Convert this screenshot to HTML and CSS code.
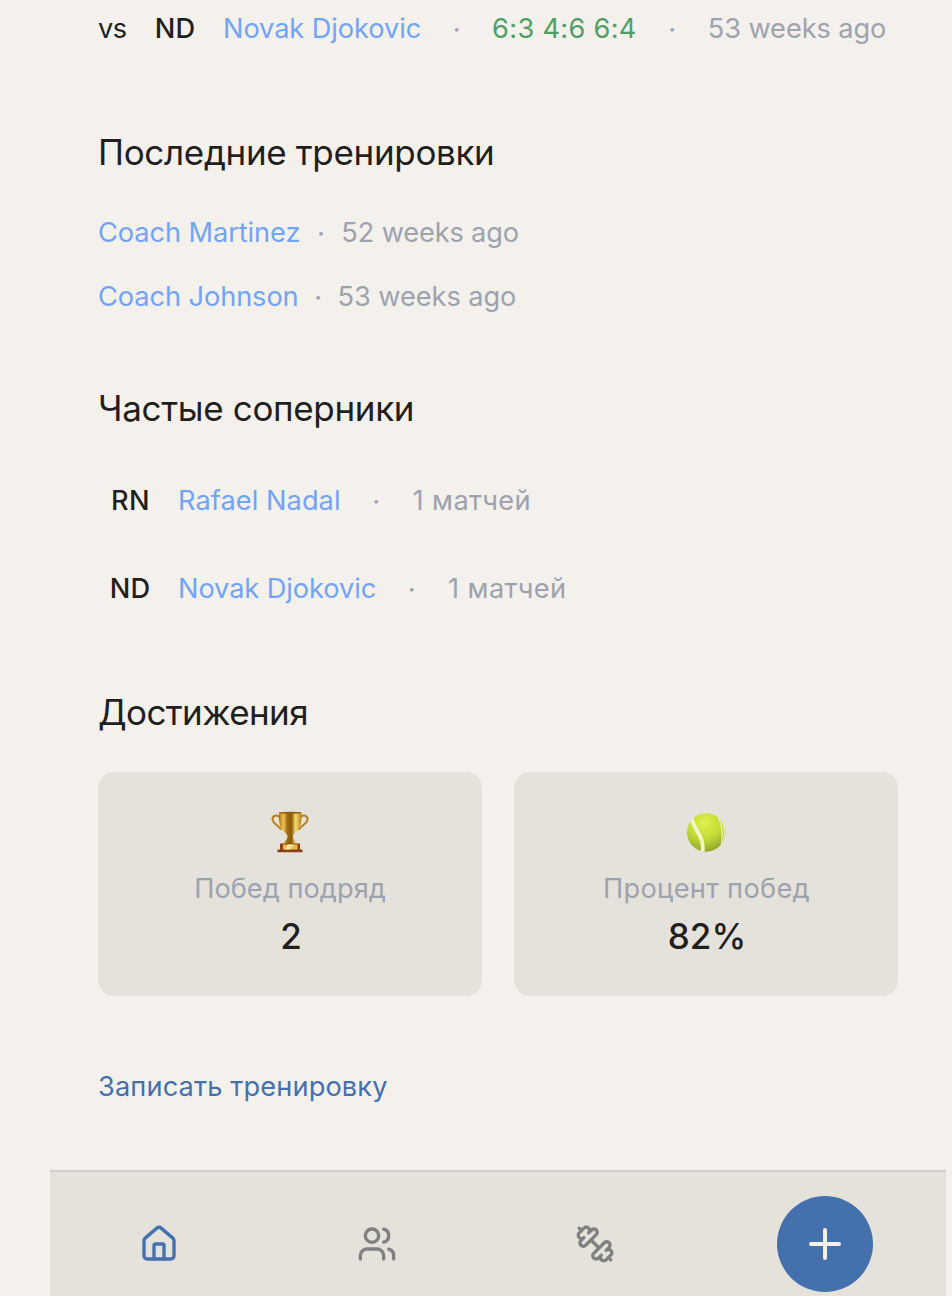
FILE: index.html
```
<!DOCTYPE html>
<html lang="ru">
<head>
<meta charset="utf-8">
<title>Профиль</title>
<link rel="stylesheet" href="styles.css">
</head>
<body>
<div class="page">
  <main class="content">
    <div class="match">
      <span class="vs">vs</span>
      <span class="avatar">ND</span>
      <a class="name">Novak Djokovic</a>
      <span class="dot">·</span>
      <span class="score">6:3 4:6 6:4</span>
      <span class="dot">·</span>
      <span class="muted">53 weeks ago</span>
    </div>

    <section class="section">
      <h2 class="title">Последние тренировки</h2>
      <div class="list">
        <div class="training"><a class="name">Coach Martinez</a><span class="dot dot-wide">·</span><span class="muted muted-tight">52 weeks ago</span></div>
        <div class="training"><a class="name">Coach Johnson</a><span class="dot">·</span><span class="muted">53 weeks ago</span></div>
      </div>
    </section>

    <section class="section">
      <h2 class="title">Частые соперники</h2>
      <div class="list">
        <div class="match"><span class="avatar avatar-wide">RN</span><a class="name name-wide">Rafael Nadal</a><span class="dot">·</span><span class="muted count">1 матчей</span></div>
        <div class="match"><span class="avatar">ND</span><a class="name">Novak Djokovic</a><span class="dot">·</span><span class="muted count">1 матчей</span></div>
      </div>
    </section>

    <section class="section">
      <h2 class="title title-tight">Достижения</h2>
      <div class="cards">
        <div class="card">
          <div class="emoji">
            <svg width="40" height="42" viewBox="0 0 40 42">
              <defs>
                <linearGradient id="gold" x1="0" x2="1" y1="0" y2="0">
                  <stop offset="0" stop-color="#a8730f"/><stop offset=".2" stop-color="#f0c04a"/><stop offset=".38" stop-color="#9c6a10"/><stop offset=".55" stop-color="#8a5a0c"/><stop offset=".74" stop-color="#f9dc70"/><stop offset="1" stop-color="#b07a18"/>
                </linearGradient>
              </defs>
              <g fill="none" stroke="#b9811c" stroke-width="2" stroke-linecap="round">
                <path d="M10 6.500C7 3 1.800 4.600 2.600 9C3.400 13 8 14 10.600 18"/>
                <path d="M30 6.500C33 3 38.200 4.600 37.400 9C36.600 13 32 14 29.400 18"/>
              </g>
              <path fill="url(#gold)" d="M9 1.500h22.500c.5 8-.5 15-4.500 18.800-2.700 2.200-4 3.200-4 5.700 0 2.500 3.500 3.500 4 8h-13.500c.5-4.500 4-5.500 4-8 0-2.500-1.500-3.500-4-5.700C9.500 16.500 8.500 9.500 9 1.500z"/>
              <ellipse cx="20.200" cy="1.800" rx="11.200" ry="1" fill="#8d641c"/>
              <path fill="#8f3f16" d="M10 32.500h20v6h2.500v2.700h-25v-2.700H10z"/>
              <path fill="#e8bc55" d="M13 33.500h14.500v5H13z"/>
              <path fill="#fbe596" d="M18 33.500h6l-4 5h-5z"/>
            </svg>
          </div>
          <div class="label">Побед подряд</div>
          <div class="value">2</div>
        </div>
        <div class="card">
          <div class="emoji">
            <svg width="40" height="42" viewBox="0 0 40 42">
              <defs>
                <radialGradient id="felt" cx=".45" cy=".25" r=".8">
                  <stop offset="0" stop-color="#e0f24e"/><stop offset=".55" stop-color="#c0d838"/><stop offset="1" stop-color="#8b9e2b"/>
                </radialGradient>
                <clipPath id="ball"><circle cx="20.200" cy="21.500" r="19.200"/></clipPath>
              </defs>
              <circle cx="20.200" cy="21.500" r="19.200" fill="url(#felt)"/>
              <g clip-path="url(#ball)" fill="none" stroke="#f2f6c8">
                <path stroke-width="3.800" d="M6 7C6.500 19 19 23 16.500 42"/>
                <path stroke-width="1.300" d="M31 4C36 12 37 22 35.500 34M34 6C39 14 39 23 37.500 31"/>
              </g>
            </svg>
          </div>
          <div class="label label-wide">Процент побед</div>
          <div class="value">82%</div>
        </div>
      </div>
    </section>

    <a class="action">Записать тренировку</a>
  </main>

  <nav class="tabbar">
    <a class="tab tab-active">
      <svg class="icon" viewBox="0 0 24 24"><path d="M15 21v-8a1 1 0 0 0-1-1h-4a1 1 0 0 0-1 1v8"/><path d="M3 10a2 2 0 0 1 .709-1.528l7-5.999a2 2 0 0 1 2.582 0l7 5.999A2 2 0 0 1 21 10v9a2 2 0 0 1-2 2H5a2 2 0 0 1-2-2z"/></svg>
    </a>
    <a class="tab">
      <svg class="icon" viewBox="0 0 24 24"><path d="M16 21v-2a4 4 0 0 0-4-4H6a4 4 0 0 0-4 4v2"/><circle cx="9" cy="7" r="4"/><path d="M22 21v-2a4 4 0 0 0-3-3.870"/><path d="M16 3.130a4 4 0 0 1 0 7.750"/></svg>
    </a>
    <a class="tab">
      <svg class="icon" viewBox="0 0 24 24"><path d="M14.400 14.400 9.600 9.600"/><path d="M18.657 21.485a2 2 0 1 1-2.829-2.828l-1.767 1.768a2 2 0 1 1-2.829-2.829l6.364-6.364a2 2 0 1 1 2.829 2.829l-1.768 1.767a2 2 0 1 1 2.828 2.829z"/><path d="m21.500 21.500-1.400-1.400"/><path d="M3.900 3.900 2.500 2.500"/><path d="M6.404 12.768a2 2 0 1 1-2.829-2.829l1.768-1.767a2 2 0 1 1-2.828-2.829l2.828-2.828a2 2 0 1 1 2.829 2.828l1.767-1.768a2 2 0 1 1 2.829 2.829z"/></svg>
    </a>
    <a class="add">
      <svg class="plus" viewBox="0 0 24 24"><path d="M5 12h14"/><path d="M12 5v14"/></svg>
    </a>
  </nav>
</div>
</body>
</html>
```
FILE: styles.css
```
* { box-sizing: border-box; }

html, body { margin: 0; height: 100%; }

body {
  background: #f4f0eb;
  color: #1f1f1f;
  font-family: "Inter", sans-serif;
  font-size: 27.2px;
  line-height: 40px;
  overflow: hidden;
}

.page {
  width: 896px;
  height: 1296px;
  margin-left: 50px;
  display: flex;
  flex-direction: column;
  overflow: hidden;
}

.content {
  flex: none;
  height: 1170px;
  padding: 0 48px;
  margin-top: -4px;
  margin-bottom: 4px;
  white-space: nowrap;
}

.match {
  display: flex;
  align-items: center;
  gap: 16px;
  height: 64px;
  padding-top: 2px;
}

.vs { width: 29px; letter-spacing: -0.5px; }

.avatar {
  width: 64px;
  flex: none;
  text-align: center;
  font-weight: 500;
  letter-spacing: 0.2px;
}

.avatar-wide { padding-left: 1px; letter-spacing: 0.4px; }

.name { color: #72a4f6; letter-spacing: -0.08px; }

.name-wide { letter-spacing: 0.06px; }

.dot {
  width: 39px;
  flex: none;
  padding-top: 2px;
  text-align: center;
  color: #9ca3af;
}

.training .dot { padding-top: 1px; }

.dot-wide { width: 41px; }

.score { color: #4f9f64; letter-spacing: 0.3px; }

.muted { color: #9ca3af; letter-spacing: -0.08px; }

.muted-tight { letter-spacing: -0.15px; }

.count { padding-left: 1px; letter-spacing: 0.4px; }

.section { margin-top: 64px; }

.title {
  margin: 0 0 32px;
  font-size: 35px;
  font-weight: 400;
  line-height: 56px;
  letter-spacing: -0.33px;
}

.title-tight { letter-spacing: -0.6px; }

.list { display: flex; flex-direction: column; gap: 24px; }

.training { display: flex; height: 40px; padding-top: 1px; }

.cards {
  display: grid;
  grid-template-columns: 1fr 1fr;
  gap: 32px;
}

.card {
  height: 224px;
  padding: 32px;
  border-radius: 16px;
  background: #e5e2db;
  text-align: center;
}

.emoji {
  display: flex;
  align-items: center;
  justify-content: center;
  height: 56px;
  margin-bottom: 8px;
}

.label { height: 40px; padding-top: 1px; color: #9ca3af; letter-spacing: 0.03px; }

.label-wide { padding-left: 1px; letter-spacing: 0.31px; }

.value {
  padding-left: 2px;
  font-size: 35px;
  font-weight: 500;
  line-height: 56px;
  letter-spacing: 0.1px;
}

.action {
  display: block;
  margin-top: 71px;
  color: #4470ae;
  letter-spacing: 0.13px;
}

.tabbar {
  flex: none;
  display: flex;
  align-items: center;
  justify-content: space-around;
  height: 146px;
  border-top: 2px solid #d1cec8;
  background: #e5e2db;
}

.tab {
  display: flex;
  justify-content: center;
  width: 72px;
  color: #808080;
}

.tab-active { color: #4470ae; }

.icon, .plus {
  width: 40px;
  height: 40px;
  fill: none;
  stroke: currentColor;
  stroke-width: 2;
  stroke-linecap: round;
  stroke-linejoin: round;
}

.plus { width: 48px; height: 48px; }

.add {
  display: flex;
  align-items: center;
  justify-content: center;
  width: 96px;
  height: 96px;
  border-radius: 50%;
  background: #4470ae;
  color: #f4f0eb;
}
```
